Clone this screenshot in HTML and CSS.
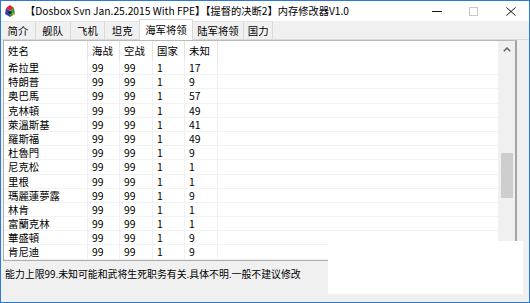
FILE: index.html
```html
<!DOCTYPE html>
<html lang="zh-CN">
<head>
  <meta charset="UTF-8" />
  <meta name="viewport" content="width=device-width, initial-scale=1.0" />
  <title>内存修改器V1.0</title>
  <link rel="stylesheet" href="styles.css">
</head>
<body>

  <div class="window">
    <!-- Title bar -->
    <div class="titlebar">
      <svg class="app-icon" width="12" height="13" viewBox="0 0 12 13">
        <polygon points="6,0 10,3 6,6 2,3" fill="#d8262c"/>
        <polygon points="2,3 6,6 6,12 1,9" fill="#3a3bb0"/>
        <polygon points="10,3 11,9 6,12 6,6" fill="#2f9a3a"/>
        <polygon points="6,6 8,7.5 6,9 4,7.5" fill="#1a1a1a"/>
        <polygon points="8,7.5 11,9 9,10" fill="#e8c020"/>
      </svg>
      <span class="title">【Dosbox Svn Jan.25.2015 With FPE】【提督的决断2】内存修改器V1.0</span>
      <div class="caption">
        <span class="cap-btn">
          <svg width="10" height="10" viewBox="0 0 10 10"><line x1="0" y1="5.5" x2="10" y2="5.5" stroke="#111" stroke-width="1"/></svg>
        </span>
        <span class="cap-btn">
          <svg width="9" height="9" viewBox="0 0 9 9"><rect x="0.5" y="0.5" width="8" height="8" fill="none" stroke="#c8c8c8" stroke-width="1"/></svg>
        </span>
        <span class="cap-btn">
          <svg width="10" height="9" viewBox="0 0 10 9"><path d="M0.5 0.5 L9.5 8.5 M9.5 0.5 L0.5 8.5" stroke="#111" stroke-width="1" fill="none"/></svg>
        </span>
      </div>
    </div>

    <!-- Tabs -->
    <div class="tabs">
      <div class="tab">简介</div>
      <div class="tab">舰队</div>
      <div class="tab">飞机</div>
      <div class="tab">坦克</div>
      <div class="tab active">海军将领</div>
      <div class="tab wide">陆军将领</div>
      <div class="tab short">国力</div>
    </div>

    <!-- Tab page with the list view -->
    <div class="panel">
      <div class="list">
        <div class="row head">
          <div class="cell">姓名</div><div class="cell">海战</div><div class="cell">空战</div><div class="cell">国家</div><div class="cell">未知</div><div class="cell fill"></div>
        </div>
        <div class="row"><div class="cell">希拉里</div><div class="cell">99</div><div class="cell">99</div><div class="cell">1</div><div class="cell">17</div><div class="cell fill"></div></div>
        <div class="row"><div class="cell">特朗普</div><div class="cell">99</div><div class="cell">99</div><div class="cell">1</div><div class="cell">9</div><div class="cell fill"></div></div>
        <div class="row"><div class="cell">奥巴馬</div><div class="cell">99</div><div class="cell">99</div><div class="cell">1</div><div class="cell">57</div><div class="cell fill"></div></div>
        <div class="row"><div class="cell">克林頓</div><div class="cell">99</div><div class="cell">99</div><div class="cell">1</div><div class="cell">49</div><div class="cell fill"></div></div>
        <div class="row"><div class="cell">萊溫斯基</div><div class="cell">99</div><div class="cell">99</div><div class="cell">1</div><div class="cell">41</div><div class="cell fill"></div></div>
        <div class="row"><div class="cell">羅斯福</div><div class="cell">99</div><div class="cell">99</div><div class="cell">1</div><div class="cell">49</div><div class="cell fill"></div></div>
        <div class="row"><div class="cell">杜魯門</div><div class="cell">99</div><div class="cell">99</div><div class="cell">1</div><div class="cell">9</div><div class="cell fill"></div></div>
        <div class="row"><div class="cell">尼克松</div><div class="cell">99</div><div class="cell">99</div><div class="cell">1</div><div class="cell">1</div><div class="cell fill"></div></div>
        <div class="row"><div class="cell">里根</div><div class="cell">99</div><div class="cell">99</div><div class="cell">1</div><div class="cell">1</div><div class="cell fill"></div></div>
        <div class="row"><div class="cell">瑪麗蓮夢露</div><div class="cell">99</div><div class="cell">99</div><div class="cell">1</div><div class="cell">9</div><div class="cell fill"></div></div>
        <div class="row"><div class="cell">林肯</div><div class="cell">99</div><div class="cell">99</div><div class="cell">1</div><div class="cell">1</div><div class="cell fill"></div></div>
        <div class="row"><div class="cell">富蘭克林</div><div class="cell">99</div><div class="cell">99</div><div class="cell">1</div><div class="cell">1</div><div class="cell fill"></div></div>
        <div class="row"><div class="cell">華盛頓</div><div class="cell">99</div><div class="cell">99</div><div class="cell">1</div><div class="cell">9</div><div class="cell fill"></div></div>
        <div class="row"><div class="cell">肯尼迪</div><div class="cell">99</div><div class="cell">99</div><div class="cell">1</div><div class="cell">9</div><div class="cell fill"></div></div>
      </div>
      <!-- Vertical scrollbar -->
      <div class="scrollbar">
        <div class="arrow">
          <svg width="8" height="5" viewBox="0 0 8 5"><path d="M0.8 4.2 L4 1 L7.2 4.2" stroke="#606060" stroke-width="1.5" fill="none"/></svg>
        </div>
        <div class="thumb"></div>
      </div>
    </div>

    <div class="status">能力上限99.未知可能和武将生死职务有关.具体不明.一般不建议修改</div>

    <!-- blank patch laid over the lower right corner -->
    <div class="mask"></div>
  </div>

</body>
</html>
```

FILE: styles.css
```css
html, body {
  margin: 0;
  padding: 0;
  background: #fff;
}

/* Window frame */
.window {
  position: relative;
  width: 530px;
  height: 303px;
  box-sizing: border-box;
  border: 1px solid #2b7bd6;
  background: #f0f0f0;
  font-family: "Noto Sans CJK SC", "Noto Sans", sans-serif;
  font-size: 10.4px;
  color: #000;
  display: flex;
  flex-direction: column;
  overflow: hidden;
}

/* Title bar */
.titlebar {
  height: 20px;
  flex: none;
  background: #fff;
  display: flex;
  align-items: center;
  padding-left: 3px;
}
.app-icon {
  flex: none;
  margin-right: 9px;
}
.title {
  flex: 1;
  font-size: 10.25px;
  white-space: nowrap;
  line-height: 14px;
}
.caption {
  display: flex;
  height: 100%;
}
.cap-btn {
  width: 37px;
  display: flex;
  align-items: center;
  justify-content: center;
}

/* Tab strip */
.tabs {
  height: 19px;
  flex: none;
  display: flex;
  align-items: flex-end;
  border-bottom: 1px solid #d9d9d9;
  box-sizing: border-box;
}
.tab {
  height: 17px;
  line-height: 17px;
  padding: 0 6.5px;
  border-right: 1px solid #d9d9d9;
  border-top: 1px solid #e3e3e3;
  white-space: nowrap;
}
.tab.active {
  height: 20px;
  line-height: 19px;
  margin-bottom: -1px;
  padding: 0 5px;
  background: #fff;
  border: 1px solid #d9d9d9;
  border-bottom: none;
  margin-left: -1px;
  position: relative;
}
.tab.wide {
  padding: 0 4.5px;
}
.tab.short {
  padding: 0 3.5px;
}

/* List view */
.panel {
  flex: none;
  display: flex;
  margin: 0 12px 0 2px;
  border: 1px solid #adadad;
  border-top-color: #b9b9b9;
  border-right: 2px solid #a5a5a5;
  background: #fff;
}
.list {
  flex: 1;
}
.row {
  display: grid;
  grid-template-columns: 84px 32px 33px 32px 33px 1fr;
  height: 14.2px;
  line-height: 14.2px;
}
.row .cell {
  padding-left: 4px;
  border-right: 1px solid #f0f0f0;
  border-bottom: 1px solid #f2f2f2;
  white-space: nowrap;
  overflow: hidden;
}
.row .cell.fill {
  border-right: none;
}
.row.head {
  height: 20px;
  line-height: 20px;
}
.row.head .cell {
  border-right-color: #e5e5e5;
  border-bottom: none;
}
.row.head .cell.fill {
  border-right: none;
}

/* Scrollbar */
.scrollbar {
  width: 17px;
  flex: none;
  background: #f0f0f0;
}
.arrow {
  height: 17px;
  display: flex;
  align-items: center;
  justify-content: center;
}
.thumb {
  margin: 95px 2px 0 3px;
  height: 45px;
  background: #cdcdcd;
}

/* Status line */
.status {
  padding: 6px 0 0 4px;
  font-size: 9.9px;
  line-height: 14px;
  white-space: nowrap;
}

/* White patch over the corner */
.mask {
  position: absolute;
  left: 327px;
  top: 240px;
  width: 195px;
  height: 53px;
  background: #fff;
}
```
